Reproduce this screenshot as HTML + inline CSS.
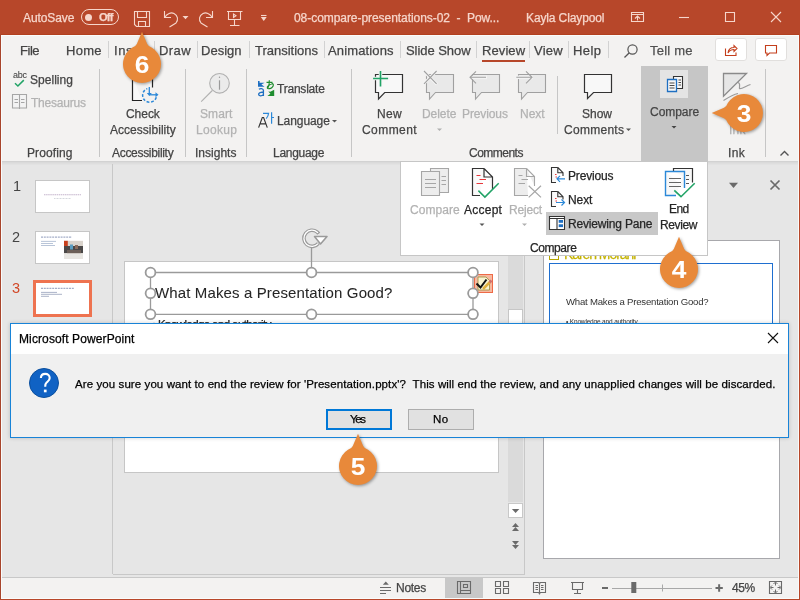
<!DOCTYPE html>
<html><head><meta charset="utf-8">
<style>
*{margin:0;padding:0;box-sizing:border-box}
html,body{width:800px;height:600px;overflow:hidden;background:#E6E6E6;font-family:"Liberation Sans",sans-serif;color:#262626;position:relative}
.a{position:absolute;white-space:nowrap}
svg.a{overflow:visible}
</style></head><body>
<div class="a" style="left:0px;top:0px;width:800px;height:35px;background:#B7472A"></div>
<div class="a" style="left:0px;top:34px;width:800px;height:1px;background:#B2401F"></div>
<div class="a" style="left:0px;top:35px;width:800px;height:126px;background:#F3F2F1"></div>
<div class="a" style="left:0px;top:35px;width:800px;height:1px;background:#FAFBFB"></div>
<div class="a" style="left:0px;top:161px;width:800px;height:1px;background:#D2D2D2"></div>
<div class="a" style="left:0px;top:162px;width:800px;height:415px;background:#E6E6E6"></div>
<div class="a" style="left:0px;top:162px;width:800px;height:3px;background:linear-gradient(#D8D8D8,#E4E4E4)"></div>
<div class="a" style="left:0px;top:578px;width:800px;height:21px;background:#F3F2F1"></div>
<div class="a" style="left:0px;top:577px;width:800px;height:1px;background:#C8C8C8"></div>
<div class="a" style="left:23.28px;top:12.29px;font-size:12px;line-height:12px;color:#F6D6CB;font-weight:normal;will-change:transform;-webkit-text-stroke:0.25px #F6D6CB;letter-spacing:-0.085px;">AutoSave</div>
<div class="a" style="left:81px;top:9px;width:38px;height:16px;border:1.3px solid #F6D6CB;border-radius:8px"></div>
<div class="a" style="left:85px;top:13.5px;width:7px;height:7px;background:#F6D6CB;border-radius:50%"></div>
<div class="a" style="left:99.34px;top:12.14px;font-size:11px;line-height:11px;color:#F6D6CB;font-weight:bold;will-change:transform;-webkit-text-stroke:0.25px #F6D6CB;letter-spacing:-0.781px;">Off</div>
<div class="a" style="left:294.28px;top:12.29px;font-size:12px;line-height:12px;color:#F6D6CB;font-weight:normal;will-change:transform;-webkit-text-stroke:0.25px #F6D6CB;letter-spacing:-0.054px;">08-compare-presentations-02&nbsp;&nbsp;-&nbsp;&nbsp;Pow...</div>
<div class="a" style="left:525.78px;top:12.29px;font-size:12px;line-height:12px;color:#F6D6CB;font-weight:normal;will-change:transform;-webkit-text-stroke:0.25px #F6D6CB;letter-spacing:-0.123px;">Kayla Claypool</div>
<svg class="a" style="left:0px;top:0px;" width="800" height="34" viewBox="0 0 800 34">
<path fill="none" stroke="#F6D6CB" stroke-width="1.1" d="M134.5 11.5 H149.5 V26.5 H136.5 L134.5 24.5 Z"/>
<path fill="none" stroke="#F6D6CB" stroke-width="1.1" d="M137.5 11.5 V17.5 H146.5 V11.5"/>
<path fill="none" stroke="#F6D6CB" stroke-width="1.1" d="M138.5 26.5 V21.5 H145.5 V26.5"/>
<path fill="none" stroke="#F6D6CB" stroke-width="1.1" d="M164.5 11 V17.5 H171"/>
<path fill="none" stroke="#F6D6CB" stroke-width="1.1" d="M164.8 17.2 C167 13.5 171 12 174 13.5 C178 15.5 178.5 20 176 23 L169.5 27"/>
<path fill="#F6D6CB" d="M182.5 16 H188.5 L185.5 19.2 Z"/>
<path fill="none" stroke="#F6D6CB" stroke-width="1.1" d="M212.5 11 V17.5 H206"/>
<path fill="none" stroke="#F6D6CB" stroke-width="1.1" d="M212.2 17.2 C210 13.5 206 12 203 13.5 C199 15.5 198.5 20 201 23 L207.5 27"/>
<path fill="none" stroke="#F6D6CB" stroke-width="1.1" d="M227 11.5 H242.5 M228.5 11.5 V19.5 H240.5 V11.5 M234.5 19.5 V25.5 M230 25.5 H239.5"/>
<path fill="none" stroke="#F6D6CB" stroke-width="1.1" d="M233.5 14 V17.5 L236 15.75 Z" stroke-width="0.9"/>
<path fill="none" stroke="#F6D6CB" stroke-width="1.1" d="M261 15.5 H266.5"/>
<path fill="#F6D6CB" d="M260.8 17 H266.7 L263.75 21 Z"/>
<path fill="none" stroke="#F6D6CB" stroke-width="1.1" d="M631.5 12.5 H643.5 V21.5 H631.5 Z M631.5 14.5 H643.5 M637.5 20.5 V16.5 M635 18.5 L637.5 16 L640 18.5"/>
<path fill="none" stroke="#F6D6CB" stroke-width="1.1" d="M679 17.5 H689"/>
<path fill="none" stroke="#F6D6CB" stroke-width="1.1" d="M725.5 12.5 H734.5 V21.5 H725.5 Z"/>
<path fill="none" stroke="#F6D6CB" stroke-width="1.1" d="M771 12 L781 22 M781 12 L771 22"/>
</svg>
<div class="a" style="left:20.22px;top:44.45px;font-size:13px;line-height:13px;color:#444444;font-weight:normal;will-change:transform;-webkit-text-stroke:0.25px #444444;letter-spacing:-0.462px;">File</div>
<div class="a" style="left:66.22px;top:44.45px;font-size:13px;line-height:13px;color:#444444;font-weight:normal;will-change:transform;-webkit-text-stroke:0.25px #444444;letter-spacing:0.294px;">Home</div>
<div class="a" style="left:114.22px;top:44.45px;font-size:13px;line-height:13px;color:#444444;font-weight:normal;will-change:transform;-webkit-text-stroke:0.25px #444444;letter-spacing:0.609px;">Insert</div>
<div class="a" style="left:159.22px;top:44.45px;font-size:13px;line-height:13px;color:#444444;font-weight:normal;will-change:transform;-webkit-text-stroke:0.25px #444444;letter-spacing:0.408px;">Draw</div>
<div class="a" style="left:201.22px;top:44.45px;font-size:13px;line-height:13px;color:#444444;font-weight:normal;will-change:transform;-webkit-text-stroke:0.25px #444444;letter-spacing:0.019px;">Design</div>
<div class="a" style="left:254.72px;top:44.45px;font-size:13px;line-height:13px;color:#444444;font-weight:normal;will-change:transform;-webkit-text-stroke:0.25px #444444;letter-spacing:-0.004px;">Transitions</div>
<div class="a" style="left:328.22px;top:44.45px;font-size:13px;line-height:13px;color:#444444;font-weight:normal;will-change:transform;-webkit-text-stroke:0.25px #444444;letter-spacing:0.139px;">Animations</div>
<div class="a" style="left:406.22px;top:44.45px;font-size:13px;line-height:13px;color:#444444;font-weight:normal;will-change:transform;-webkit-text-stroke:0.25px #444444;letter-spacing:-0.053px;">Slide Show</div>
<div class="a" style="left:481.72px;top:44.45px;font-size:13px;line-height:13px;color:#444444;font-weight:normal;will-change:transform;-webkit-text-stroke:0.25px #444444;letter-spacing:0.087px;">Review</div>
<div class="a" style="left:534.22px;top:44.45px;font-size:13px;line-height:13px;color:#444444;font-weight:normal;will-change:transform;-webkit-text-stroke:0.25px #444444;letter-spacing:0.206px;">View</div>
<div class="a" style="left:573.22px;top:44.45px;font-size:13px;line-height:13px;color:#444444;font-weight:normal;will-change:transform;-webkit-text-stroke:0.25px #444444;letter-spacing:0.441px;">Help</div>
<div class="a" style="left:649.82px;top:44.45px;font-size:13px;line-height:13px;color:#505050;font-weight:normal;will-change:transform;-webkit-text-stroke:0.25px #505050;letter-spacing:0.230px;">Tell me</div>
<div class="a" style="left:108px;top:41px;width:1px;height:17px;background:#D2D2D2"></div>
<div class="a" style="left:154px;top:41px;width:1px;height:17px;background:#D2D2D2"></div>
<div class="a" style="left:197px;top:41px;width:1px;height:17px;background:#D2D2D2"></div>
<div class="a" style="left:249px;top:41px;width:1px;height:17px;background:#D2D2D2"></div>
<div class="a" style="left:324px;top:41px;width:1px;height:17px;background:#D2D2D2"></div>
<div class="a" style="left:400px;top:41px;width:1px;height:17px;background:#D2D2D2"></div>
<div class="a" style="left:476px;top:41px;width:1px;height:17px;background:#D2D2D2"></div>
<div class="a" style="left:529px;top:41px;width:1px;height:17px;background:#D2D2D2"></div>
<div class="a" style="left:568px;top:41px;width:1px;height:17px;background:#D2D2D2"></div>
<div class="a" style="left:608px;top:41px;width:1px;height:17px;background:#D2D2D2"></div>
<div class="a" style="left:482px;top:60px;width:43px;height:2px;background:#B7472A"></div>
<div class="a" style="left:715px;top:38px;width:32px;height:23px;background:#fff;border:1px solid #E1DFDD;border-radius:3px"></div>
<div class="a" style="left:755px;top:38px;width:32px;height:23px;background:#fff;border:1px solid #E1DFDD;border-radius:3px"></div>
<svg class="a" style="left:0px;top:34px;" width="800" height="32" viewBox="0 0 800 32">
<circle cx="632.5" cy="15.5" r="4.6" fill="none" stroke="#555" stroke-width="1.2"/>
<path d="M629.3 18.8 L624.5 23.5" stroke="#555" stroke-width="1.3" fill="none"/>
<path d="M725.5 14.5 V21.5 H736 V18.5" fill="none" stroke="#C43E1C" stroke-width="1.1"/>
<path d="M728 19 C728.5 15 731 13.5 734 13.5 V11.5 L737 14.5 L734 17.5 V15.5 C731.5 15.5 729.5 16.5 728 19 Z" fill="none" stroke="#C43E1C" stroke-width="1.1"/>
<path d="M765.5 11.5 H776.5 V19 H769.5 L767 21.5 V19 H765.5 Z" fill="none" stroke="#C43E1C" stroke-width="1.1"/>
</svg>
<div class="a" style="left:30.28px;top:74.29px;font-size:12px;line-height:12px;color:#444444;font-weight:normal;will-change:transform;-webkit-text-stroke:0.25px #444444;letter-spacing:0.035px;">Spelling</div>
<div class="a" style="left:30.78px;top:97.29px;font-size:12px;line-height:12px;color:#B2B2B2;font-weight:normal;will-change:transform;-webkit-text-stroke:0.25px #B2B2B2;letter-spacing:-0.219px;">Thesaurus</div>
<div class="a" style="left:26.78px;top:147.29px;font-size:12px;line-height:12px;color:#444444;font-weight:normal;will-change:transform;-webkit-text-stroke:0.25px #444444;letter-spacing:0.106px;">Proofing</div>
<div class="a" style="left:99px;top:69px;width:1px;height:88px;background:#C6C6C6"></div>
<div class="a" style="left:125.88px;top:107.89px;font-size:12px;line-height:12px;color:#444444;font-weight:normal;will-change:transform;-webkit-text-stroke:0.25px #444444;letter-spacing:-0.043px;">Check</div>
<div class="a" style="left:109.68px;top:123.89px;font-size:12px;line-height:12px;color:#444444;font-weight:normal;will-change:transform;-webkit-text-stroke:0.25px #444444;letter-spacing:0.024px;">Accessibility</div>
<div class="a" style="left:111.68px;top:147.29px;font-size:12px;line-height:12px;color:#444444;font-weight:normal;will-change:transform;-webkit-text-stroke:0.25px #444444;letter-spacing:-0.309px;">Accessibility</div>
<div class="a" style="left:185px;top:69px;width:1px;height:88px;background:#C6C6C6"></div>
<div class="a" style="left:200.28px;top:107.89px;font-size:12px;line-height:12px;color:#B2B2B2;font-weight:normal;will-change:transform;-webkit-text-stroke:0.25px #B2B2B2;letter-spacing:0.109px;">Smart</div>
<div class="a" style="left:195.88px;top:123.89px;font-size:12px;line-height:12px;color:#B2B2B2;font-weight:normal;will-change:transform;-webkit-text-stroke:0.25px #B2B2B2;letter-spacing:0.294px;">Lookup</div>
<div class="a" style="left:194.88px;top:147.29px;font-size:12px;line-height:12px;color:#444444;font-weight:normal;will-change:transform;-webkit-text-stroke:0.25px #444444;letter-spacing:0.012px;">Insights</div>
<div class="a" style="left:246px;top:69px;width:1px;height:88px;background:#C6C6C6"></div>
<div class="a" style="left:276.88px;top:83.29px;font-size:12px;line-height:12px;color:#444444;font-weight:normal;will-change:transform;-webkit-text-stroke:0.25px #444444;letter-spacing:-0.217px;">Translate</div>
<div class="a" style="left:276.88px;top:115.29px;font-size:12px;line-height:12px;color:#444444;font-weight:normal;will-change:transform;-webkit-text-stroke:0.25px #444444;letter-spacing:-0.079px;">Language</div>
<div class="a" style="left:272.88px;top:147.29px;font-size:12px;line-height:12px;color:#444444;font-weight:normal;will-change:transform;-webkit-text-stroke:0.25px #444444;letter-spacing:-0.279px;">Language</div>
<div class="a" style="left:351px;top:69px;width:1px;height:88px;background:#C6C6C6"></div>
<div class="a" style="left:376.78px;top:108.04px;font-size:12px;line-height:12px;color:#444444;font-weight:normal;will-change:transform;-webkit-text-stroke:0.25px #444444;letter-spacing:0.342px;">New</div>
<div class="a" style="left:361.78px;top:124.29px;font-size:12px;line-height:12px;color:#444444;font-weight:normal;will-change:transform;-webkit-text-stroke:0.25px #444444;letter-spacing:0.446px;">Comment</div>
<div class="a" style="left:422.28px;top:108.04px;font-size:12px;line-height:12px;color:#B2B2B2;font-weight:normal;will-change:transform;-webkit-text-stroke:0.25px #B2B2B2;letter-spacing:-0.050px;">Delete</div>
<div class="a" style="left:462.28px;top:108.04px;font-size:12px;line-height:12px;color:#B2B2B2;font-weight:normal;will-change:transform;-webkit-text-stroke:0.25px #B2B2B2;letter-spacing:-0.107px;">Previous</div>
<div class="a" style="left:519.78px;top:108.04px;font-size:12px;line-height:12px;color:#B2B2B2;font-weight:normal;will-change:transform;-webkit-text-stroke:0.25px #B2B2B2;letter-spacing:0.005px;">Next</div>
<div class="a" style="left:557px;top:76px;width:1px;height:58px;background:#C6C6C6"></div>
<div class="a" style="left:582.28px;top:107.79px;font-size:12px;line-height:12px;color:#444444;font-weight:normal;will-change:transform;-webkit-text-stroke:0.25px #444444;letter-spacing:0.007px;">Show</div>
<div class="a" style="left:563.68px;top:124.29px;font-size:12px;line-height:12px;color:#444444;font-weight:normal;will-change:transform;-webkit-text-stroke:0.25px #444444;letter-spacing:0.275px;">Comments</div>
<div class="a" style="left:468.78px;top:147.29px;font-size:12px;line-height:12px;color:#444444;font-weight:normal;will-change:transform;-webkit-text-stroke:0.25px #444444;letter-spacing:-0.511px;">Comments</div>
<div class="a" style="left:641px;top:66px;width:67px;height:95px;background:#C6C6C6"></div>
<div class="a" style="left:660px;top:70px;width:28px;height:28px;background:#E4E4E4"></div>
<div class="a" style="left:650.28px;top:106.29px;font-size:12px;line-height:12px;color:#444444;font-weight:normal;will-change:transform;-webkit-text-stroke:0.25px #444444;letter-spacing:-0.036px;">Compare</div>
<div class="a" style="left:727.58px;top:147.29px;font-size:12px;line-height:12px;color:#444444;font-weight:normal;will-change:transform;-webkit-text-stroke:0.25px #444444;letter-spacing:0.416px;">Ink</div>
<div class="a" style="left:729.28px;top:123.89px;font-size:12px;line-height:12px;color:#B2B2B2;font-weight:normal;will-change:transform;-webkit-text-stroke:0.25px #B2B2B2;letter-spacing:0.216px;">Ink</div>
<div class="a" style="left:765px;top:69px;width:1px;height:88px;background:#C6C6C6"></div>
<svg class="a" style="left:0px;top:0px;" width="800" height="260" viewBox="0 0 800 260">
<path d="M15 83.3 L17.9 86 L23.8 80.1" fill="none" stroke="#21A366" stroke-width="1.5"/>
<path d="M12.5 94.5 H19.5 V108 H12.5 Z M19.5 94.5 H26.5 V108 H19.5 Z M19.5 108 V109" fill="#F3F3F3" stroke="#A6A6A6" stroke-width="1.1"/>
<path d="M14.5 99.5 H18 M14.5 102.5 H18 M21 99.5 H24.5 M21 102.5 H24.5" stroke="#A6A6A6" stroke-width="1"/>
<path d="M132.5 76 H152.5 V87.5 M132.5 76 V100.5 H142" fill="#F8F8F8" stroke="#222" stroke-width="1.2"/>
<path d="M156.3 97.3 A7 7 0 1 1 147.3 88.6" fill="none" stroke="#2B88D8" stroke-width="1.5" stroke-dasharray="2.8 1.7"/>
<path d="M149.3 87 V94" stroke="#2B88D8" stroke-width="1.3"/>
<path d="M146.8 93 H151.8 L149.3 96 Z" fill="#2B88D8"/>
<path d="M149.3 94.8 H156" stroke="#2B88D8" stroke-width="1.3"/>
<path d="M155.5 92.3 V97.3 L158.5 94.8 Z" fill="#2B88D8"/>
<circle cx="219.5" cy="83.3" r="9.8" fill="#EBEBEB" stroke="#B0B0B0" stroke-width="1.1"/>
<path d="M219.5 80.3 V89.7" stroke="#9A9A9A" stroke-width="1.2"/>
<circle cx="219.5" cy="77.3" r="0.7" fill="#9A9A9A"/>
<path d="M212.3 90.5 L201.2 101.7" stroke="#B0B0B0" stroke-width="1.1"/>
<path d="M375.5 74.5 H402.5 V92.5 H384.7 L378.5 99 V92.5 H375.5 Z" fill="#F8F8F8" stroke="#333333" stroke-width="1.2"/>
<path d="M373.1 78.5 H388.1 M380.5 71.1 V86.4" stroke="#F3F3F3" stroke-width="3.5"/>
<path d="M373.1 78.5 H388.1 M380.5 71.1 V86.4" stroke="#21A366" stroke-width="1.6"/>
<path d="M426.5 74.5 H453.5 V92.5 H435.5 L429.5 99 V92.5 H426.5 Z" fill="#E9E9E9" stroke="#A0A0A0" stroke-width="1.1"/>
<path d="M423 70.5 L437 84.5 M437 70.5 L423 84.5" stroke="#F3F3F3" stroke-width="3"/>
<path d="M424 71 L436.6 83.8 M436.6 71 L424 83.8" stroke="#A0A0A0" stroke-width="1.1"/>
<path d="M472.5 74.5 H499.5 V92.5 H481.5 L475.5 99 V92.5 H472.5 Z" fill="#E9E9E9" stroke="#A0A0A0" stroke-width="1.1"/>
<path d="M469 77.3 H487" stroke="#F3F3F3" stroke-width="3.5"/>
<path d="M470 77.3 H486 M476 71.3 L470 77.3 L476 83.3" fill="none" stroke="#A0A0A0" stroke-width="1.1"/>
<path d="M518.5 74.5 H545.5 V92.5 H527.5 L521.5 99 V92.5 H518.5 Z" fill="#E9E9E9" stroke="#A0A0A0" stroke-width="1.1"/>
<path d="M515 77.3 H533" stroke="#F3F3F3" stroke-width="3.5"/>
<path d="M516.3 77.3 H532 M526 71.3 L532 77.3 L526 83.3" fill="none" stroke="#A0A0A0" stroke-width="1.1"/>
<path d="M584.5 74.5 H611.5 V92.5 H593.5 L587.5 98.5 V92.5 H584.5 Z" fill="#F8F8F8" stroke="#333333" stroke-width="1.2"/>
<path d="M673.5 79 V76.5 H682.5 V88.5 H676" fill="#F8F8F8" stroke="#333333" stroke-width="1.1"/>
<path d="M678.5 80 H681 M678.5 82.5 H681 M678.5 85 H681" stroke="#333333" stroke-width="0.9"/>
<path d="M667.5 79.5 H676.5 V91.5 H667.5 Z" fill="#F8F8F8" stroke="#1E6FC2" stroke-width="1.3"/>
<path d="M669.5 83 H674.5 M669.5 85.5 H674.5 M669.5 88 H674.5" stroke="#333333" stroke-width="0.9"/>
<path d="M723.5 73.5 H746.5 L723.5 96.2 Z" fill="#E6E6E6" stroke="#8A8A8A" stroke-width="1.3"/>
<path d="M738 82.5 C741 83 739 87 739.5 88.5 C741 89.5 746 86 750.5 84.5" fill="none" stroke="#9A9A9A" stroke-width="1.2"/>
<path d="M723.5 100.5 C729 97 733 94.5 738 93.5" fill="none" stroke="#9A9A9A" stroke-width="1.1"/>
<path d="M332 120 H337 L334.5 122.5 Z" fill="#555"/>
<path d="M437 128.5 H442 L439.5 131 Z" fill="#B0B0B0"/>
<path d="M626 128.5 H631 L628.5 131 Z" fill="#555"/>
<path d="M671.5 126 H676.5 L674 128.5 Z" fill="#444"/>
<path d="M780.5 155.5 L784.5 151.5 L788.5 155.5" fill="none" stroke="#555" stroke-width="1.4"/>
<path d="M258.9 89.3 C260.3 88.3 262.9 88.3 263.4 90.2 V96 M263.4 92.4 C261 92 258.6 92.5 258.6 94.3 C258.6 96.2 261.8 96.3 263.4 94.6" fill="none" stroke="#1E6FC2" stroke-width="1.3"/>
<path d="M258 81 H259.6 V82.8 H264.6 L261.4 84.6 L264.6 86.8 H258 Z" fill="#1E6FC2"/>
<path d="M274.2 89.8 V96 H267.4 L270.4 93.7 L268.3 91.6 L270.3 91.8 Z" fill="#1E8C2E"/>
</svg>
<svg class="a" style="left:0px;top:0px;" width="800" height="260" viewBox="0 0 800 260">
<path d="M266.5 82.3 H272.5 M269.3 80.2 C269.5 83 269 86 267.8 88.3 M272.8 83.8 C269.5 84.3 266.8 86.3 267.3 88 C267.8 89.2 270.5 88.8 272 87.5 C274.3 85.5 273.5 83.5 271.5 83.4" fill="none" stroke="#1E8C2E" stroke-width="1.15"/>
<path d="M258.6 127.6 L262.3 117.5 H263.6 L267.3 127.6 M260.2 123.9 H265.7" fill="none" stroke="#333" stroke-width="1.15"/>
<path d="M263 113.3 H268.6 C268.4 115.5 267.6 117.2 266.2 118.6 M271.6 112.2 V123.8 M271.6 117.5 H274" fill="none" stroke="#2B88D8" stroke-width="1.2"/>
</svg>
<div class="a" style="left:12.66px;top:70.73px;font-size:9px;line-height:9px;color:#444;font-weight:normal;will-change:transform;-webkit-text-stroke:0.25px #444;letter-spacing:-0.215px;-webkit-text-stroke:0.05px #444">abc</div>
<div class="a" style="left:112px;top:164px;width:1px;height:410px;background:#C8C8C8"></div>
<div class="a" style="left:35px;top:180px;width:55px;height:33px;background:#fff;border:1px solid #C6C6C6"></div>
<div class="a" style="left:35px;top:231px;width:55px;height:33px;background:#fff;border:1px solid #C6C6C6"></div>
<div class="a" style="left:13.13px;top:178.98px;font-size:14.5px;line-height:14.5px;color:#444;font-weight:normal;will-change:transform;-webkit-text-stroke:0.25px #444;letter-spacing:0.176px;-webkit-text-stroke:0">1</div>
<div class="a" style="left:12.13px;top:230.38px;font-size:14.5px;line-height:14.5px;color:#444;font-weight:normal;will-change:transform;-webkit-text-stroke:0.25px #444;letter-spacing:1.176px;-webkit-text-stroke:0">2</div>
<div class="a" style="left:33px;top:280px;width:59px;height:37px;background:#fff;border:3px solid #EE7350"></div>
<div class="a" style="left:12.13px;top:281.38px;font-size:14.5px;line-height:14.5px;color:#D24726;font-weight:normal;will-change:transform;-webkit-text-stroke:0.25px #D24726;letter-spacing:1.176px;-webkit-text-stroke:0">3</div>
<svg class="a" style="left:0px;top:0px;" width="120" height="330" viewBox="0 0 120 330">
<path d="M44 194.8 H81" stroke="#8A6A9A" stroke-width="1.1" stroke-dasharray="1.5 0.6" opacity=".5"/>
<path d="M54 198.5 H71" stroke="#8890A0" stroke-width="0.8" stroke-dasharray="1 0.5" opacity=".45"/>
<path d="M41 237.2 H72" stroke="#5A6A9A" stroke-width="1.2" stroke-dasharray="2 0.8" opacity=".55"/>
<path d="M41 241.4 H56 M41 243.5 H53 M41 245.5 H55" stroke="#5070A0" stroke-width="0.8" opacity=".5"/>
<rect x="64" y="240.8" width="19" height="17.8" fill="#D9D3CC"/>
<rect x="64" y="240.8" width="3.8" height="6" fill="#C8401E"/>
<rect x="64" y="246" width="19" height="7" fill="#4A4848"/>
<rect x="70" y="244.5" width="3" height="5" fill="#5A9CC0"/>
<rect x="75" y="245" width="3" height="4" fill="#8A6A5A"/>
<rect x="67" y="250" width="14" height="3.5" fill="#7A6A60" opacity=".7"/>
<rect x="64" y="253.5" width="19" height="5.1" fill="#E8E6E2"/>
<path d="M41 288.3 H74" stroke="#5A6A9A" stroke-width="1.2" stroke-dasharray="2 0.8" opacity=".55"/>
<path d="M41 292.4 H57 M41 294.3 H62 M41 296.3 H49" stroke="#405080" stroke-width="0.8" opacity=".55"/>
</svg>
<div class="a" style="left:124px;top:261px;width:375px;height:212px;background:#fff;border:1px solid #C6C6C6"></div>
<div class="a" style="left:113px;top:574px;width:412px;height:1px;background:#C8C8C8"></div>
<div class="a" style="left:508px;top:162px;width:15px;height:340px;background:#DADADA"></div>
<div class="a" style="left:508px;top:309px;width:15px;height:120px;background:#fff;border:1px solid #C6C6C6"></div>
<div class="a" style="left:524px;top:162px;width:1px;height:412px;background:#C8C8C8"></div>
<div class="a" style="left:154.50px;top:285.05px;font-size:15px;line-height:15px;color:#262626;font-weight:normal;will-change:transform;-webkit-text-stroke:0.25px #262626;letter-spacing:0.131px;-webkit-text-stroke:0.05px #262626">What Makes a Presentation Good?</div>
<div class="a" style="left:152.31px;top:319.02px;font-size:11.5px;line-height:11.5px;color:#262626;font-weight:normal;will-change:transform;-webkit-text-stroke:0.25px #262626;letter-spacing:-0.601px;">&bull; Knowledge and authority</div>
<svg class="a" style="left:0px;top:0px;" width="800" height="340" viewBox="0 0 800 340">
<path d="M150.5 272.5 H473 V314.3 H150.5 Z M311.5 248 V272.5" fill="none" stroke="#9A9A9A" stroke-width="1.3"/>
<circle cx="312" cy="238.3" r="8.1" fill="none" stroke="#9A9A9A" stroke-width="3.6" stroke-dasharray="40.5 10.4" transform="rotate(38 312 238.3)"/>
<circle cx="312" cy="238.3" r="8.1" fill="none" stroke="#fff" stroke-width="1.3" stroke-dasharray="39 11.9" transform="rotate(41 312 238.3)"/>
<path d="M314.5 236.5 H327 L320.5 244 Z" fill="#fff" stroke="#9A9A9A" stroke-width="1.6" stroke-linejoin="round"/>
<rect x="474.5" y="274.5" width="18" height="18" fill="#F6B9A0" stroke="#EE6A47" stroke-width="1"/>
<path d="M478 277 H486 L489.5 280.5 V290 H478 Z" fill="#F8F3D0" stroke="#9A8A3A" stroke-width="0.8"/>
<path d="M476.5 283.5 L480.5 287.5 L486.5 279.5" fill="none" stroke="#111" stroke-width="2"/>
<path d="M483 289 L490.5 281.5" stroke="#E0B040" stroke-width="2.5"/>
<path d="M489.5 282.5 L491.5 280.5" stroke="#D07070" stroke-width="2.5"/>
<circle cx="150.5" cy="272.5" r="4.9" fill="#fff" stroke="#9A9A9A" stroke-width="1.8"/><circle cx="150.5" cy="293.3" r="4.9" fill="#fff" stroke="#9A9A9A" stroke-width="1.8"/><circle cx="150.5" cy="314.3" r="4.9" fill="#fff" stroke="#9A9A9A" stroke-width="1.8"/><circle cx="311.5" cy="272.5" r="4.9" fill="#fff" stroke="#9A9A9A" stroke-width="1.8"/><circle cx="311.5" cy="314.3" r="4.9" fill="#fff" stroke="#9A9A9A" stroke-width="1.8"/><circle cx="473" cy="272.5" r="4.9" fill="#fff" stroke="#9A9A9A" stroke-width="1.8"/><circle cx="473" cy="293.3" r="4.9" fill="#fff" stroke="#9A9A9A" stroke-width="1.8"/><circle cx="473" cy="314.3" r="4.9" fill="#fff" stroke="#9A9A9A" stroke-width="1.8"/>
</svg>
<div class="a" style="left:543px;top:240px;width:237px;height:319px;background:#fff;border:1px solid #A8A8AC"></div>
<div class="a" style="left:549px;top:263px;width:224px;height:150px;border:1px solid #1F6FD0"></div>
<div class="a" style="left:564.16px;top:246.60px;font-size:14px;line-height:14px;color:#C5B300;font-weight:normal;will-change:transform;-webkit-text-stroke:0.25px #C5B300;letter-spacing:-1.069px;">Karen Morahi</div>
<div class="a" style="left:549px;top:250px;width:9.5px;height:9.5px;border:1.5px solid #B5A500;background:#FFF"></div>
<div class="a" style="left:565.92px;top:296.92px;font-size:9.6px;line-height:9.6px;color:#333;font-weight:normal;will-change:transform;-webkit-text-stroke:0.25px #333;letter-spacing:-0.222px;-webkit-text-stroke:0">What Makes a Presentation Good?</div>
<div class="a" style="left:565.61px;top:318.55px;font-size:6.5px;line-height:6.5px;color:#333;font-weight:normal;will-change:transform;-webkit-text-stroke:0.25px #333;letter-spacing:-0.161px;-webkit-text-stroke:0">&bull; Knowledge and authority</div>
<svg class="a" style="left:0px;top:0px;" width="800" height="600" viewBox="0 0 800 600">
<path d="M729 182.7 H738 L733.5 188 Z" fill="#6A6A6A"/>
<path d="M770.5 180.5 L779.5 189.5 M779.5 180.5 L770.5 189.5" stroke="#6A6A6A" stroke-width="1.7"/>
</svg>
<div class="a" style="left:508px;top:503px;width:15px;height:15px;background:#fff;border:1px solid #C8C8C8"></div>
<svg class="a" style="left:0px;top:0px;" width="800" height="600" viewBox="0 0 800 600">
<path d="M511.9 509 H519.3 L515.6 513 Z" fill="#6A6A6A"/>
<path d="M512 527 H519 L515.5 523 Z M512 531 H519 L515.5 527 Z" fill="#6A6A6A"/>
<path d="M512 541 H519 L515.5 545 Z M512 545 H519 L515.5 549 Z" fill="#6A6A6A"/>
</svg>
<div class="a" style="left:396.03px;top:582.29px;font-size:12px;line-height:12px;color:#444444;font-weight:normal;will-change:transform;-webkit-text-stroke:0.25px #444444;letter-spacing:-0.289px;">Notes</div>
<div class="a" style="left:445px;top:578px;width:38px;height:20px;background:#C8C8C8"></div>
<div class="a" style="left:732.28px;top:582.29px;font-size:12px;line-height:12px;color:#444444;font-weight:normal;will-change:transform;-webkit-text-stroke:0.25px #444444;letter-spacing:-0.389px;">45%</div>
<svg class="a" style="left:0px;top:0px;" width="800" height="600" viewBox="0 0 800 600">
<path d="M382.8 584.8 L385.8 581.6 L388.8 584.8 Z" fill="#6A6A6A"/>
<path d="M380 587.5 H391 M380 590.5 H391 M380 593.5 H386" stroke="#6A6A6A" stroke-width="1.1"/>
<path d="M457.5 581.5 H470.5 V593.5 H457.5 Z M460.5 581.5 V593.5 M460.5 590.5 H470.5 M463.5 584.5 H467.5 V587.5 H463.5 Z" fill="none" stroke="#6A6A6A" stroke-width="1.1"/>
<path d="M495.5 581.5 H500.5 V586.5 H495.5 Z M503.5 581.5 H508.5 V586.5 H503.5 Z M495.5 588.5 H500.5 V593.5 H495.5 Z M503.5 588.5 H508.5 V593.5 H503.5 Z" fill="none" stroke="#6A6A6A" stroke-width="1.1"/>
<path d="M533.5 582.5 H538.5 L539.5 583.5 L540.5 582.5 H545.5 V592.5 H540.5 L539.5 593.5 L538.5 592.5 H533.5 Z M539.5 583.5 V594.5" fill="none" stroke="#6A6A6A" stroke-width="1.1"/>
<path d="M535.5 585.5 H538 M535.5 587.5 H538 M535.5 589.5 H538 M541 585.5 H543.5 M541 587.5 H543.5 M541 589.5 H543.5" stroke="#6A6A6A" stroke-width="1"/>
<path d="M571 582.5 H584 M572.5 582.5 V589.5 H582.5 V582.5 M577.5 589.5 V593.5 M574 593.5 H581" fill="none" stroke="#6A6A6A" stroke-width="1.1"/>
<path d="M602 588 H608" stroke="#6A6A6A" stroke-width="2"/>
<path d="M612 588.5 H712" stroke="#A8A8A8" stroke-width="1"/>
<path d="M662.5 584.5 V591.5" stroke="#A8A8A8" stroke-width="1"/>
<rect x="631.3" y="582" width="5" height="11" fill="#6A6A6A"/>
<path d="M715.5 588 H722.8 M719.15 584.3 V591.7" stroke="#6A6A6A" stroke-width="2"/>
<path d="M769.5 581.5 H781.5 V593.5 H769.5 Z" fill="none" stroke="#6A6A6A" stroke-width="1.1" rx="1"/>
<path d="M775.5 582.5 V585.5 M773.5 584 L775.5 582 L777.5 584 M775.5 592.5 V589.5 M773.5 591 L775.5 593 L777.5 591 M770.5 587.5 H773.5 M772 585.5 L770 587.5 L772 589.5 M780.5 587.5 H777.5 M779 585.5 L781 587.5 L779 589.5" fill="none" stroke="#6A6A6A" stroke-width="1"/>
</svg>
<div class="a" style="left:400px;top:161px;width:308px;height:95px;background:#fff;border:1px solid #C6C6C6"></div>
<div class="a" style="left:409.78px;top:203.59px;font-size:12px;line-height:12px;color:#B2B2B2;font-weight:normal;will-change:transform;-webkit-text-stroke:0.25px #B2B2B2;letter-spacing:0.064px;">Compare</div>
<div class="a" style="left:463.58px;top:203.59px;font-size:12px;line-height:12px;color:#262626;font-weight:normal;will-change:transform;-webkit-text-stroke:0.25px #262626;letter-spacing:0.251px;">Accept</div>
<div class="a" style="left:508.68px;top:203.59px;font-size:12px;line-height:12px;color:#B2B2B2;font-weight:normal;will-change:transform;-webkit-text-stroke:0.25px #B2B2B2;letter-spacing:-0.195px;">Reject</div>
<div class="a" style="left:546px;top:212px;width:112px;height:23px;background:#C8C8C8"></div>
<div class="a" style="left:567.78px;top:170.29px;font-size:12px;line-height:12px;color:#262626;font-weight:normal;will-change:transform;-webkit-text-stroke:0.25px #262626;letter-spacing:-0.178px;">Previous</div>
<div class="a" style="left:567.78px;top:194.29px;font-size:12px;line-height:12px;color:#262626;font-weight:normal;will-change:transform;-webkit-text-stroke:0.25px #262626;letter-spacing:-0.078px;">Next</div>
<div class="a" style="left:567.78px;top:218.29px;font-size:12px;line-height:12px;color:#262626;font-weight:normal;will-change:transform;-webkit-text-stroke:0.25px #262626;letter-spacing:-0.175px;">Reviewing Pane</div>
<div class="a" style="left:669.28px;top:203.09px;font-size:12px;line-height:12px;color:#262626;font-weight:normal;will-change:transform;-webkit-text-stroke:0.25px #262626;letter-spacing:-0.556px;">End</div>
<div class="a" style="left:660.28px;top:219.29px;font-size:12px;line-height:12px;color:#262626;font-weight:normal;will-change:transform;-webkit-text-stroke:0.25px #262626;letter-spacing:-0.381px;">Review</div>
<div class="a" style="left:529.68px;top:241.89px;font-size:12px;line-height:12px;color:#262626;font-weight:normal;will-change:transform;-webkit-text-stroke:0.25px #262626;letter-spacing:-0.419px;">Compare</div>
<svg class="a" style="left:0px;top:0px;" width="800" height="260" viewBox="0 0 800 260">
<path d="M430.5 171 V168.5 H448.5 V192.5 H440" fill="#EDEDED" stroke="#A6A6A6" stroke-width="1.1"/>
<path d="M441.5 176.5 H446 M441.5 180.5 H446 M441.5 184.5 H446" stroke="#A6A6A6" stroke-width="1"/>
<path d="M421.5 171.5 H439.5 V195.5 H421.5 Z" fill="#EDEDED" stroke="#A6A6A6" stroke-width="1.1"/>
<path d="M425 179.5 H436 M425 183.5 H436 M425 187.5 H436" stroke="#A6A6A6" stroke-width="1"/>
<path d="M484 168.5 H472.5 V195.5 H480 M484 168.5 L492.5 177 V189 M484 168.5 V177 H492.5" fill="#FAFAFA" stroke="#333333" stroke-width="1.2"/>
<path d="M476.5 175.5 H480.5 M479.5 179.5 H486 M476.5 183.5 H483" stroke="#E8373B" stroke-width="1.1"/>
<path d="M478.4 190.6 L484.9 197.1 L498.7 183.3" fill="none" stroke="#21A366" stroke-width="1.5"/>
<path d="M526.5 168.5 H514.5 V195.5 H528 M526.5 168.5 L534.5 176.5 V186 M526.5 168.5 V176.5 H534.5" fill="#EDEDED" stroke="#A6A6A6" stroke-width="1.1"/>
<path d="M518.5 175.5 H522.5 M521.5 179.5 H528 M518.5 183.5 H525" stroke="#A6A6A6" stroke-width="1"/>
<path d="M528.7 185.7 L541 197.4 M541 185.7 L528.7 197.4" stroke="#A6A6A6" stroke-width="1.2"/>
<path d="M479.5 223.5 H484.5 L482 226 Z" fill="#555"/>
<path d="M522 223.5 H527 L524.5 226 Z" fill="#B0B0B0"/>
<path d="M557.8 167.5 H551.5 V182.5 H556 M557.8 167.5 L563 172.7 V176 M557.8 167.5 V172.7 H563" fill="#FAFAFA" stroke="#333333" stroke-width="1.1"/>
<path d="M555 174.5 H556.5 M555.5 177 H557" stroke="#E8373B" stroke-width="1.1"/>
<path d="M565 178.8 H557 M560 175.8 L557 178.8 L560 181.8" fill="none" stroke="#2B88D8" stroke-width="1.2"/>
<path d="M557.8 191.5 H551.5 V206.5 H556 M557.8 191.5 L563 196.7 V199.5 M557.8 191.5 V196.7 H563" fill="#FAFAFA" stroke="#333333" stroke-width="1.1"/>
<path d="M555 198.5 H556.5 M555.5 201 H557" stroke="#E8373B" stroke-width="1.1"/>
<path d="M556 202.5 H564.5 M561.5 199.5 L564.5 202.5 L561.5 205.5" fill="none" stroke="#2B88D8" stroke-width="1.2"/>
<path d="M549.5 216.5 H564.5 V229.5 H549.5 Z M549.5 218.5 H564.5 M557 218.5 V229.5" fill="#fff" stroke="#333333" stroke-width="1.1"/>
<rect x="558.7" y="220" width="4.3" height="2.8" fill="#1E6FC2"/>
<rect x="558.7" y="224.3" width="4.3" height="2.8" fill="#1E6FC2"/>
<path d="M673.5 171 V168.5 H692.5 V182.5" fill="#F8F8F8" stroke="#333333" stroke-width="1.2"/>
<path d="M686 175.5 H689 M686 179.5 H689 M686 183.5 H689" stroke="#555" stroke-width="1.1"/>
<path d="M665.5 171.5 H684.5 V188 M684.5 171.5 H665.5 V195.5 H676" fill="#F8F8F8" stroke="#2B88D8" stroke-width="1.4"/>
<path d="M669 178.5 H681 M669 182.5 H681 M669 186.5 H681" stroke="#666" stroke-width="1.1"/>
<path d="M674.3 190.3 L681 196.7 L694.7 183.3" fill="none" stroke="#21A366" stroke-width="1.6"/>
</svg>
<div class="a" style="left:10px;top:323px;width:779px;height:115px;background:#F0F0F0;border:1px solid #1883D7;box-shadow:0 0 4px rgba(0,0,0,.18)"></div>
<div class="a" style="left:11px;top:324px;width:777px;height:30px;background:#fff"></div>
<div class="a" style="left:18.78px;top:333.29px;font-size:12px;line-height:12px;color:#000;font-weight:normal;will-change:transform;-webkit-text-stroke:0.25px #000;letter-spacing:0.109px;">Microsoft PowerPoint</div>
<div class="a" style="left:29px;top:368px;width:30px;height:30px;border-radius:50%;background:#1062C4;border:1px solid #0B4F9E"></div>
<svg class="a" style="left:0px;top:0px;" width="800" height="600" viewBox="0 0 800 600"><path d="M40.9 378 C40.9 375.2 43 373.9 45.3 373.9 C47.8 373.9 49.7 375.5 49.7 377.9 C49.7 380.3 48 381.3 46.6 382.6 C45.5 383.6 45.2 384.6 45.2 386.8" fill="none" stroke="#fff" stroke-width="2.1"/><rect x="43.9" y="389.6" width="2.7" height="2.7" fill="#fff"/></svg>
<svg class="a" style="left:0px;top:0px;" width="800" height="440" viewBox="0 0 800 440"><path d="M768 333 L778 343 M778 333 L768 343" stroke="#111" stroke-width="1.1"/></svg>
<div class="a" style="left:75.31px;top:378.72px;font-size:11.5px;line-height:11.5px;color:#000;font-weight:normal;will-change:transform;-webkit-text-stroke:0.25px #000;letter-spacing:0.089px;">Are you sure you want to end the review for &#39;Presentation.pptx&#39;?&nbsp;&nbsp;This will end the review, and any unapplied changes will be discarded.</div>
<div class="a" style="left:326px;top:409px;width:66px;height:21px;background:#E1E1E1;border:2px solid #0078D7"></div>
<div class="a" style="left:350.31px;top:414.47px;font-size:11.5px;line-height:11.5px;color:#000;font-weight:normal;will-change:transform;-webkit-text-stroke:0.25px #000;letter-spacing:-1.440px;">Yes</div>
<div class="a" style="left:408px;top:409px;width:66px;height:21px;background:#E1E1E1;border:1px solid #ADADAD"></div>
<div class="a" style="left:433.06px;top:414.47px;font-size:11.5px;line-height:11.5px;color:#000;font-weight:normal;will-change:transform;-webkit-text-stroke:0.25px #000;letter-spacing:0.429px;">No</div>
<svg class="a" style="left:102px;top:24px;filter:drop-shadow(1.6px 1.8px 1.4px rgba(0,0,0,.38))" width="80" height="80" viewBox="-40 -40 80 80"><path d="M0 -32.3 L-5.2 -20 Q-6.3 -17.5 -10 -16.16 A19 19 0 1 0 10 -16.16 Q6.3 -17.5 5.2 -20 Z" fill="#E8893A" transform="rotate(0)"/></svg>
<div class="a" style="left:122px;top:44px;width:40px;height:40px;line-height:42px;text-align:center;font-size:23.5px;font-weight:bold;color:#fff;transform:scaleX(1.12)">6</div>
<svg class="a" style="left:704.4px;top:73px;filter:drop-shadow(1.6px 1.8px 1.4px rgba(0,0,0,.38))" width="80" height="80" viewBox="-40 -40 80 80"><path d="M0 -32.3 L-5.2 -20 Q-6.3 -17.5 -10 -16.16 A19 19 0 1 0 10 -16.16 Q6.3 -17.5 5.2 -20 Z" fill="#E8893A" transform="rotate(-90)"/></svg>
<div class="a" style="left:724.4px;top:93px;width:40px;height:40px;line-height:42px;text-align:center;font-size:23.5px;font-weight:bold;color:#fff;transform:scaleX(1.12)">3</div>
<svg class="a" style="left:638.9px;top:228.60000000000002px;filter:drop-shadow(1.6px 1.8px 1.4px rgba(0,0,0,.38))" width="80" height="80" viewBox="-40 -40 80 80"><path d="M0 -32.3 L-5.2 -20 Q-6.3 -17.5 -10 -16.16 A19 19 0 1 0 10 -16.16 Q6.3 -17.5 5.2 -20 Z" fill="#E8893A" transform="rotate(0)"/></svg>
<div class="a" style="left:658.9px;top:248.60000000000002px;width:40px;height:40px;line-height:42px;text-align:center;font-size:23.5px;font-weight:bold;color:#fff;transform:scaleX(1.12)">4</div>
<svg class="a" style="left:318px;top:425.9px;filter:drop-shadow(1.6px 1.8px 1.4px rgba(0,0,0,.38))" width="80" height="80" viewBox="-40 -40 80 80"><path d="M0 -32.3 L-5.2 -20 Q-6.3 -17.5 -10 -16.16 A19 19 0 1 0 10 -16.16 Q6.3 -17.5 5.2 -20 Z" fill="#E8893A" transform="rotate(0)"/></svg>
<div class="a" style="left:338px;top:445.9px;width:40px;height:40px;line-height:42px;text-align:center;font-size:23.5px;font-weight:bold;color:#fff;transform:scaleX(1.12)">5</div>
<div class="a" style="left:1px;top:35px;width:1px;height:564px;background:#FAFBFB"></div>
<div class="a" style="left:798px;top:35px;width:1px;height:564px;background:#FAFBFB"></div>
<div class="a" style="left:1px;top:598px;width:798px;height:1px;background:#FAFBFB"></div>
<div class="a" style="left:0px;top:34px;width:1px;height:566px;background:#A8452C"></div>
<div class="a" style="left:799px;top:34px;width:1px;height:566px;background:#B7472A"></div>
<div class="a" style="left:0px;top:599px;width:800px;height:1px;background:#B7472A"></div>
</body></html>
